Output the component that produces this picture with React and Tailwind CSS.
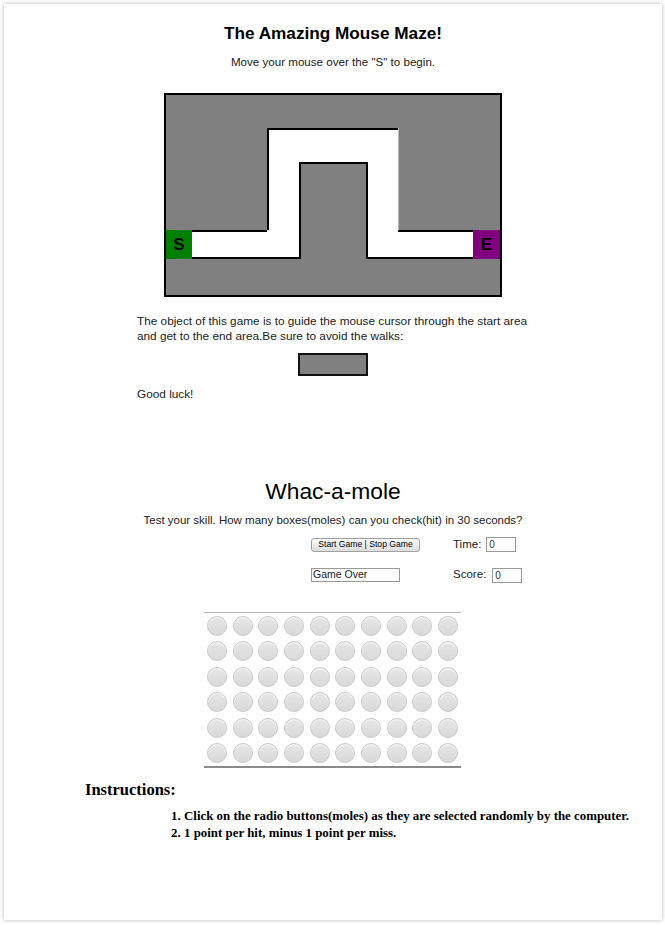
import React from 'react';

const sans = { fontFamily: '"Liberation Sans", Arial, sans-serif' };
const serif = { fontFamily: '"Liberation Serif", Georgia, serif' };

const Radio = () => (
  <div className="flex h-[25.5px] items-center justify-center">
    <div className="h-[20px] w-[20px] rounded-full border border-[#c9c9c9] bg-gradient-to-b from-[#e6e6e6] to-[#d9d9d9] shadow-[inset_0_1px_1px_rgba(255,255,255,0.8)]" />
  </div>
);

const Maze = () => (
  <div className="mx-auto mt-[24px] flex w-[338px] flex-col border-2 border-black bg-[#808080]">
    {/* top wall */}
    <div className="h-[33px]" />
    {/* upper corridor */}
    <div className="flex h-[34px]">
      <div className="w-[101px]" />
      <div className="w-[131px] border-l-2 border-t-2 border-black bg-white" />
      <div className="flex-1 border-l border-[#bbb]" />
    </div>
    {/* side corridors with pillar */}
    <div className="flex h-[68px]">
      <div className="w-[101px]" />
      <div className="w-[32px] border-l-2 border-black bg-white" />
      <div className="w-[69px] border-x-2 border-t-2 border-black" />
      <div className="w-[30px] bg-white" />
      <div className="flex-1 border-l border-[#bbb]" />
    </div>
    {/* bottom corridor with start and end */}
    <div className="flex h-[29px]">
      <div className="flex w-[26px] items-center justify-center bg-[#008000] text-[17px] font-bold text-black">S</div>
      <div className="w-[75px] border-y-2 border-black bg-white" />
      <div className="w-[32px] border-b-2 border-black bg-white" />
      <div className="w-[69px] border-x-2 border-black" />
      <div className="w-[30px] border-b-2 border-black bg-white" />
      <div className="w-[75px] border-y-2 border-black bg-white" />
      <div className="flex flex-1 items-center justify-center bg-[#800080] text-[17px] font-bold text-black">E</div>
    </div>
    {/* bottom wall */}
    <div className="h-[36px]" />
  </div>
);

export default function App() {
  return (
    <div className="h-[925px] w-[665px] bg-white p-[4px] pr-[3px] pb-[5px]" style={sans}>
      <div className="flex h-full flex-col bg-white text-[#222] shadow-[0_0_4px_rgba(0,0,0,0.3)]">
        <h1 className="mt-[19px] text-center text-[17.2px] font-bold leading-[20px] text-black">
          The Amazing Mouse Maze!
        </h1>
        <p className="mt-[12px] text-center text-[11.6px] leading-[14px]">
          Move your mouse over the "S" to begin.
        </p>

        <Maze />

        <p className="ml-[133px] mt-[17px] text-[11.8px] leading-[15px]">
          The object of this game is to guide the mouse cursor through the start area
          <br />
          and get to the end area.Be sure to avoid the walks:
        </p>
        <div className="mx-auto mt-[9px] h-[23px] w-[70px] border-2 border-[#111] bg-[#808080]" />
        <p className="ml-[133px] mt-[11px] text-[11.8px] leading-[14px]">Good luck!</p>

        <h2 className="mt-[77px] text-center text-[22.8px] leading-[26px] text-black">Whac-a-mole</h2>
        <p className="mt-[9px] text-center text-[11.5px] leading-[14px]">
          Test your skill. How many boxes(moles) can you check(hit) in 30 seconds?
        </p>

        <div className="ml-[307px] mt-[10px] flex h-[15px] items-center">
          <div className="w-[142px]">
            <button className="flex h-[14px] w-[109px] items-center justify-center rounded-[3px] border border-[#a0a0a0] bg-gradient-to-b from-[#fdfdfd] to-[#dcdcdc] text-[8.6px] leading-none text-black">
              Start Game | Stop Game
            </button>
          </div>
          <span className="text-[11.5px]">Time:</span>
          <div className="ml-[5px] flex h-[15px] w-[30px] items-center border border-[#999] px-[2px] text-[10px] text-[#333]">0</div>
        </div>

        <div className="ml-[307px] mt-[16px] flex h-[14px] items-center">
          <div className="w-[142px]">
            <div className="flex h-[14px] w-[89px] items-center border border-[#999] px-[1px] text-[10.5px] text-[#222]">
              Game Over
            </div>
          </div>
          <span className="text-[11.5px]">Score:</span>
          <div className="ml-[6px] flex h-[15px] w-[30px] items-center border border-[#999] px-[2px] text-[10px] text-[#333]">0</div>
        </div>

        <div className="ml-[200px] mt-[30px] grid w-[257px] grid-cols-10 border-b-2 border-t border-b-[#8a8a8a] border-t-[#b5b5b5]">
          {Array.from({ length: 60 }).map((_, i) => (
            <Radio key={i} />
          ))}
        </div>

        <h3 className="ml-[81px] mt-[13px] text-[16.5px] font-bold leading-[18px] text-black" style={serif}>
          Instructions:
        </h3>
        <ol
          className="ml-[140px] mt-[9px] list-decimal pl-[40px] text-[12.9px] font-bold leading-[17px] text-black"
          style={serif}
        >
          <li>Click on the radio buttons(moles) as they are selected randomly by the computer.</li>
          <li>1 point per hit, minus 1 point per miss.</li>
        </ol>
      </div>
    </div>
  );
}
